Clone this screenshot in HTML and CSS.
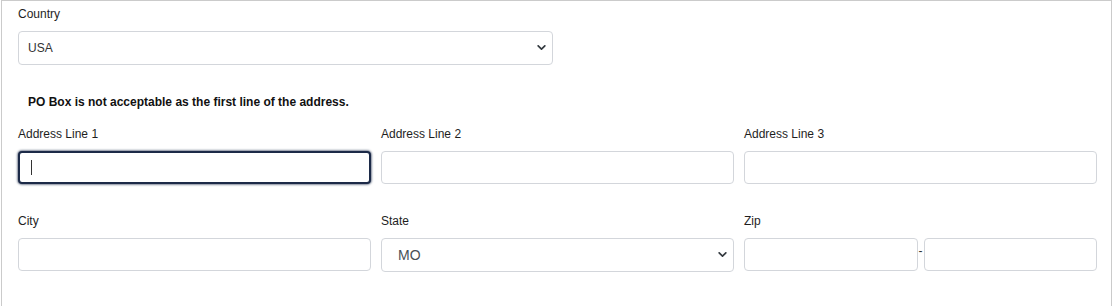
FILE: index.html
```html
<!DOCTYPE html>
<html lang="en">
<head>
    <meta charset="UTF-8">
    <meta name="viewport" content="width=device-width, initial-scale=1.0">
    <title>Address</title>
    <link rel="stylesheet" href="styles.css">
</head>
<body>
    <div class="address-card">
        <!-- Country -->
        <div class="form-row two">
            <div class="form-group">
                <label for="country">Country</label>
                <div class="select-wrap">
                    <select id="country" class="form-select country-select">
                        <option>USA</option>
                    </select>
                    <svg class="chevron" viewBox="0 0 10 6" width="9" height="5"><polyline points="1,1 5,5 9,1"/></svg>
                </div>
            </div>
        </div>

        <p class="po-note">PO Box is not acceptable as the first line of the address.</p>

        <!-- Address lines -->
        <div class="form-row three">
            <div class="form-group">
                <label for="addr1">Address Line 1</label>
                <div class="input-wrap">
                    <input type="text" id="addr1" class="form-input is-focused">
                    <span class="caret"></span>
                </div>
            </div>
            <div class="form-group">
                <label for="addr2">Address Line 2</label>
                <input type="text" id="addr2" class="form-input">
            </div>
            <div class="form-group">
                <label for="addr3">Address Line 3</label>
                <input type="text" id="addr3" class="form-input">
            </div>
        </div>

        <!-- City / State / Zip -->
        <div class="form-row three">
            <div class="form-group">
                <label for="city">City</label>
                <input type="text" id="city" class="form-input">
            </div>
            <div class="form-group">
                <label for="state">State</label>
                <div class="select-wrap">
                    <select id="state" class="form-select state-select">
                        <option>MO</option>
                    </select>
                    <svg class="chevron" viewBox="0 0 10 6" width="9" height="5"><polyline points="1,1 5,5 9,1"/></svg>
                </div>
            </div>
            <div class="form-group">
                <label for="zip">Zip</label>
                <div class="zip-fields">
                    <input type="text" id="zip" class="form-input">
                    <span class="zip-dash">-</span>
                    <input type="text" id="zip4" class="form-input">
                </div>
            </div>
        </div>
    </div>
</body>
</html>
```

FILE: styles.css
```css
body {
    font-family: "Liberation Sans", Arial, sans-serif;
    background-color: #fff;
    color: #222;
    margin: 0;
    padding: 0;
    overflow: hidden;
}

.address-card {
    margin-left: 1px;
    width: 1079px;
    min-height: 330px;
    border: 1px solid #cbcbcb;
    padding: 4px 14px 0 16px;
    background-color: #fff;
}

.form-row {
    display: grid;
    column-gap: 10px;
}

.form-row.two {
    grid-template-columns: 1fr 1fr;
}

.form-row.three {
    grid-template-columns: 1fr 1fr 1fr;
}

.form-group {
    margin-bottom: 28px;
    min-width: 0;
}

.form-group label {
    display: block;
    font-size: 12px;
    line-height: 18px;
    margin-bottom: 8px;
    color: #1e1e1e;
}

.po-note {
    margin: 0 0 14px 0;
    padding-left: 10px;
    font-size: 12px;
    line-height: 18px;
    font-weight: bold;
    color: #111;
}

.form-input {
    display: block;
    box-sizing: border-box;
    width: 100%;
    height: 33px;
    margin: 0;
    padding: 0 12px;
    border: 1px solid #d3d6db;
    border-radius: 4px;
    background-color: #fff;
    font-family: inherit;
    font-size: 14px;
    outline: none;
}

.form-input.is-focused {
    border: 2px solid #1c2a48;
    box-shadow: 0 0 2px 1px rgba(28, 42, 72, 0.55);
}

.input-wrap {
    position: relative;
}

.caret {
    position: absolute;
    left: 13px;
    top: 9px;
    width: 1px;
    height: 15px;
    background-color: #333;
}

.select-wrap {
    position: relative;
}

.form-select {
    display: block;
    box-sizing: border-box;
    width: 100%;
    height: 34px;
    margin: 0;
    border: 1px solid #d3d6db;
    border-radius: 4px;
    background-color: #fff;
    font-family: inherit;
    -webkit-appearance: none;
    appearance: none;
    outline: none;
}

.country-select {
    padding: 0 9px;
    font-size: 12px;
    color: #333;
}

.state-select {
    padding: 0 16px;
    font-size: 14px;
    color: #495057;
}

.chevron {
    position: absolute;
    right: 7px;
    top: 50%;
    margin-top: -3px;
    fill: none;
    stroke: #343a40;
    stroke-width: 2;
    stroke-linecap: round;
    stroke-linejoin: round;
    pointer-events: none;
}

.zip-fields {
    display: flex;
    align-items: center;
}

.zip-fields .form-input {
    flex: 1;
    min-width: 0;
}

.zip-dash {
    font-size: 12px;
    line-height: 12px;
    color: #333;
    margin-top: -8px;
    padding: 0 1px;
}
```
